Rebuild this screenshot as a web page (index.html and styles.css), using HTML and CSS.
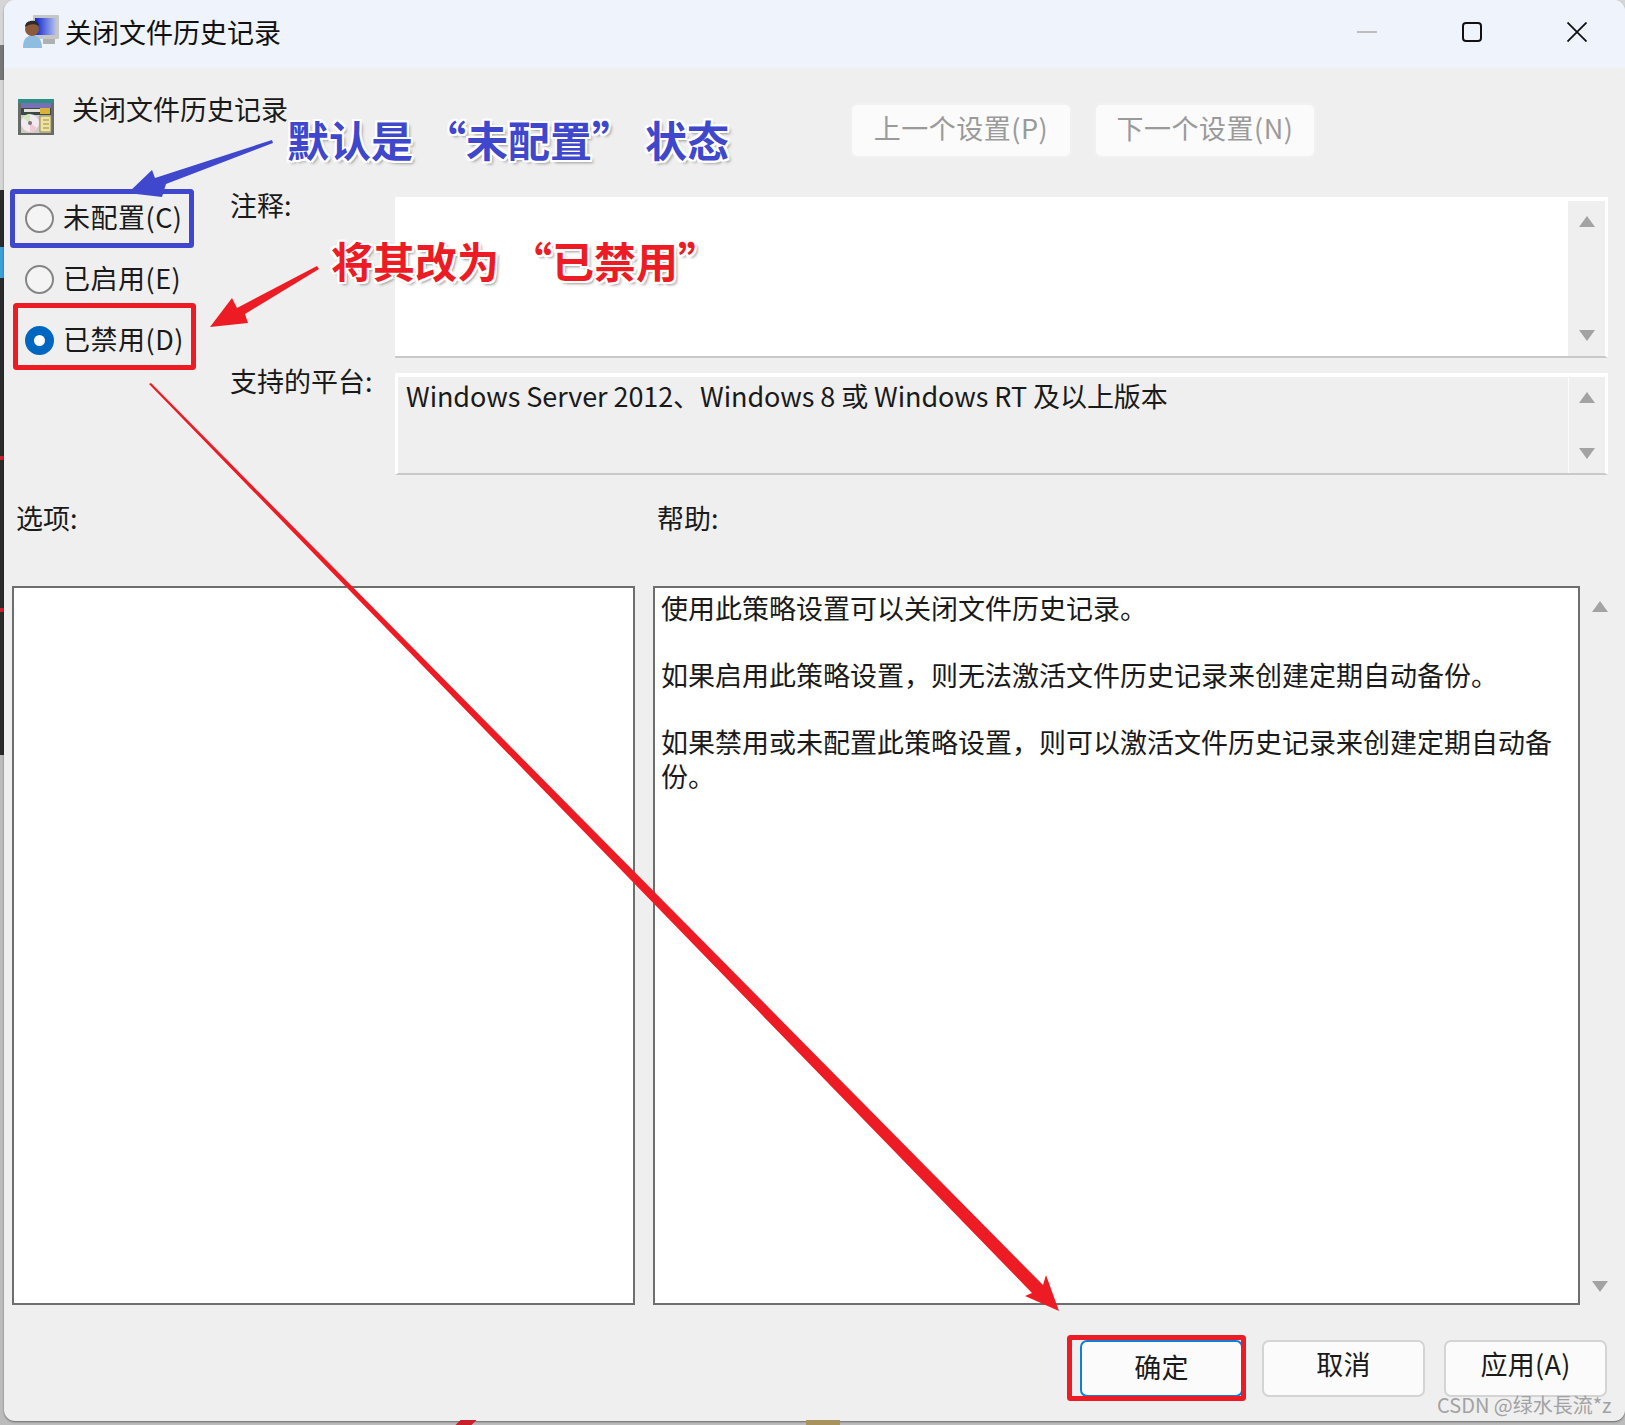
FILE: index.html
```html
<!DOCTYPE html>
<html lang="zh-CN">
<head>
  <meta charset="UTF-8" />
  <meta name="viewport" content="width=device-width, initial-scale=1.0" />
  <title>关闭文件历史记录</title>
  <link rel="stylesheet" href="styles.css">
</head>
<body>
  <div class="page">
    <div class="desk-bit slash"></div>
    <div class="desk-bit folder"></div>

    <div class="window">
      <div class="titlebar">
        <svg class="title-icon" viewBox="0 0 36 34">
          <defs>
            <linearGradient id="screen" x1="0" x2="1" y1="0" y2="0">
              <stop offset="0" stop-color="#0a22d0"/>
              <stop offset="1" stop-color="#b4c2ee"/>
            </linearGradient>
          </defs>
          <rect x="10" y="0" width="26" height="24" rx="1" fill="#c6c6c6"/>
          <rect x="12" y="3" width="21" height="17" fill="url(#screen)"/>
          <rect x="20" y="24" width="12" height="5" fill="#b0b0b0"/>
          <path d="M0 33 C0 24 3 21 10 20 C16 21 19 25 19 33 Z" fill="#8fbde0"/>
          <circle cx="9" cy="14" r="7" fill="#8a5a3a"/>
          <path d="M2 12 C2 4 16 4 16 11 C11 8 6 9 2 12 Z" fill="#2f2a28"/>
        </svg>
        <span class="title-text">关闭文件历史记录</span>
        <div class="win-controls">
          <svg viewBox="0 0 20 20"><path d="M0 10H20" stroke="#bdbdbd" stroke-width="2"/></svg>
          <svg viewBox="0 0 20 20"><rect x="1" y="1" width="18" height="18" rx="3" fill="none" stroke="#111" stroke-width="2"/></svg>
          <svg viewBox="0 0 20 20"><path d="M0.5 0.5L19.5 19.5M19.5 0.5L0.5 19.5" stroke="#111" stroke-width="1.8"/></svg>
        </div>
      </div>

      <div class="top-row">
        <svg class="policy-icon" viewBox="0 0 36 36">
          <rect width="36" height="36" fill="#666a68"/>
          <rect x="0" y="0" width="36" height="4" fill="#2c8f86"/>
          <rect x="3" y="4" width="30" height="5" fill="#7670b4"/>
          <rect x="3" y="9" width="30" height="7" fill="#3a4a44"/>
          <rect x="6" y="10" width="18" height="3" fill="#e4e2da"/>
          <rect x="22" y="9" width="10" height="6" fill="#d8b23c"/>
          <rect x="3" y="16" width="30" height="18" fill="#cfcbbf"/>
          <circle cx="12" cy="24" r="9" fill="#f3e9f0"/>
          <path d="M12 24L5 19A9 9 0 0 1 12 15Z" fill="#cfe6b8"/>
          <path d="M12 24L19 29A9 9 0 0 1 12 33Z" fill="#f0c8d8"/>
          <circle cx="12" cy="24" r="2" fill="#777"/>
          <rect x="22" y="17" width="11" height="16" fill="#f2e39c" stroke="#8f8a60"/>
          <path d="M25 21H31M25 25H31M25 29H31" stroke="#8f8a60"/>
        </svg>
        <span class="policy-name">关闭文件历史记录</span>
        <div class="nav-buttons">
          <button class="btn disabled">上一个设置(P)</button>
          <button class="btn disabled">下一个设置(N)</button>
        </div>
      </div>

      <div class="settings">
        <div class="radios">
          <div class="radio-row"><span class="radio"></span>未配置(C)</div>
          <div class="radio-row"><span class="radio"></span>已启用(E)</div>
          <div class="radio-row"><span class="radio checked"></span>已禁用(D)</div>
        </div>
        <div class="fields">
          <div class="field">
            <label>注释:</label>
            <div class="box note-box">
              <div class="box-text"></div>
              <div class="scroll"><span class="tri up"></span><span class="tri down"></span></div>
            </div>
          </div>
          <div class="field">
            <label>支持的平台:</label>
            <div class="box platform-box">
              <div class="box-text">Windows Server 2012、Windows 8 或 Windows RT 及以上版本</div>
              <div class="scroll"><span class="tri up"></span><span class="tri down"></span></div>
            </div>
          </div>
        </div>
      </div>

      <div class="panels">
        <div class="panel options">
          <div class="panel-label">选项:</div>
          <div class="list"></div>
        </div>
        <div class="panel help">
          <div class="panel-label">帮助:</div>
          <div class="list help-text">
            <p>使用此策略设置可以关闭文件历史记录。</p>
            <p>如果启用此策略设置&#xFF0C;则无法激活文件历史记录来创建定期自动备份。</p>
            <p>如果禁用或未配置此策略设置&#xFF0C;则可以激活文件历史记录来创建定期自动备份。</p>
          </div>
        </div>
        <div class="help-scroll"><span class="tri up"></span><span class="tri down"></span></div>
      </div>

      <div class="footer">
        <button class="btn focused">确定</button>
        <button class="btn">取消</button>
        <button class="btn">应用(A)</button>
      </div>
    </div>

    <!-- annotations drawn on top of the screenshot -->
    <svg class="marks" viewBox="0 0 1625 1425">
      <rect x="12.5" y="191.5" width="179" height="54" fill="none" stroke="#3f48cc" stroke-width="5" rx="1"/>
      <rect x="15.5" y="305.5" width="178" height="62" fill="none" stroke="#ed1c24" stroke-width="5" rx="1"/>
      <rect x="1069.5" y="1337.5" width="174" height="61" fill="none" stroke="#ed1c24" stroke-width="5" rx="1"/>
      <polygon points="272,140 273,143 166,184 162,197 128,193 152,170 155,178" fill="#3f48cc"/>
      <polygon points="317,266 319,269 245,314 248,323 210,327 232,298 237,308" fill="#ed1c24"/>
      <polygon points="149,384 151,383 1043,1285 1046,1275 1059,1311 1025,1296 1032,1293" fill="#ed1c24"/>
    </svg>
    <div class="note note-blue">默认是 “未配置” 状态</div>
    <div class="note note-red">将其改为 “已禁用”</div>
    <div class="watermark">CSDN @绿水長流*z</div>
  </div>
</body>
</html>
```

FILE: styles.css
```css
* {
  box-sizing: border-box;
  margin: 0;
  padding: 0;
  font-family: "Noto Sans CJK SC", "Noto Sans", sans-serif;
}
body {
  background: #b9b9b9;
  overflow: hidden;
}
.page {
  position: relative;
  width: 1625px;
  height: 1425px;
  overflow: hidden;
  background: linear-gradient(to bottom,
    #d6d6d6 0, #d6d6d6 45px, #777 45px, #777 80px, #d6d6d6 80px, #d6d6d6 190px,
    #2b2b2b 190px, #2b2b2b 247px, #3aa0d8 247px, #3aa0d8 278px, #2b2b2b 278px,
    #2b2b2b 456px, #c8202a 456px, #c8202a 460px, #2b2b2b 460px,
    #2b2b2b 608px, #c8202a 608px, #c8202a 612px, #2b2b2b 612px,
    #2b2b2b 755px, #bcbcbc 755px, #bcbcbc 100%);
}
.desk-bit {
  position: absolute;
}
.slash {
  left: 458px;
  top: 1420px;
  width: 16px;
  height: 5px;
  background: #c8202a;
  transform: skewX(-45deg);
}
.folder {
  left: 806px;
  top: 1420px;
  width: 34px;
  height: 5px;
  background: #a8935c;
}
.window {
  width: 1621px;
  height: 1421px;
  margin-left: 4px;
  background: #efefef;
  border-radius: 11px;
  box-shadow: 0 1px 2px rgba(0, 0, 0, 0.45);
  overflow: hidden;
  color: #1a1a1a;
  font-size: 27px;
}

/* title bar */
.titlebar {
  display: flex;
  align-items: center;
  height: 68px;
  padding: 0 38px 4px 19px;
  background: #eff3fb;
}
.title-icon {
  width: 36px;
  height: 34px;
  margin-right: 6px;
}
.title-text {
  color: #111;
  margin-top: -2px;
}
.win-controls {
  display: flex;
  gap: 85px;
  margin-left: auto;
}
.win-controls svg {
  width: 20px;
  height: 20px;
}

/* heading row */
.top-row {
  display: flex;
  align-items: flex-start;
  height: 119px;
  padding: 31px 309px 0 14px;
}
.policy-icon {
  width: 36px;
  height: 36px;
  margin-right: 18px;
}
.policy-name {
  margin-top: -10px;
}
.nav-buttons {
  display: flex;
  gap: 22px;
  margin-left: auto;
  padding-top: 4px;
}
.btn {
  width: 163px;
  height: 57px;
  padding-bottom: 10px;
  background: #fbfbfb;
  border: 2px solid #d4d4d4;
  border-radius: 7px;
  color: #1a1a1a;
  font-size: 27px;
  letter-spacing: 0.3px;
}
.btn.disabled {
  width: 222px;
  height: 55px;
  padding-bottom: 6px;
  border-color: #f1f1f1;
  color: #9a9a9a;
  letter-spacing: 0.5px;
}
.btn.focused {
  padding-bottom: 4px;
  border-color: #0f7fd8;
}

/* radios and top fields */
.settings {
  display: flex;
}
.radios {
  width: 226px;
  padding-left: 21px;
  letter-spacing: 0.5px;
}
.radio-row {
  display: flex;
  align-items: center;
  height: 61px;
  padding-bottom: 2px;
}
.radio {
  flex: none;
  width: 29px;
  height: 29px;
  margin: 4px 9px 0 0;
  border: 2px solid #858585;
  border-radius: 50%;
  background: #f4f4f4;
}
.radio.checked {
  border: 9px solid #0067c0;
  background: #fff;
}
.fields {
  flex: 1;
  display: flex;
  flex-direction: column;
  gap: 15px;
  padding: 10px 17px 0 0;
}
.field {
  display: flex;
}
.field label {
  width: 165px;
  line-height: 34px;
  margin-top: -9px;
}
.box {
  flex: 1;
  display: flex;
  border-bottom: 2px solid #c9c9c9;
  border-right: 3px solid #fff;
}
.note-box {
  height: 161px;
  background: #fff;
}
.platform-box {
  height: 102px;
  background: #efefef;
  border-top: 4px solid #fff;
  border-left: 3px solid #fff;
}
.box-text {
  flex: 1;
  padding: 0 8px;
  line-height: 38px;
  letter-spacing: -0.08px;
}
.scroll {
  display: flex;
  flex-direction: column;
  align-items: center;
  justify-content: space-between;
  width: 37px;
  margin-top: 4px;
  padding: 15px 0 15px;
  background: #efefef;
}
.platform-box .scroll {
  margin-top: 0;
  border-left: 1px solid #fbfbfb;
  padding: 15px 0 14px;
}
.tri {
  display: block;
  width: 0;
  height: 0;
  border-left: 8px solid transparent;
  border-right: 8px solid transparent;
}
.tri.up {
  border-bottom: 11px solid #a3a3a3;
}
.tri.down {
  border-top: 11px solid #a3a3a3;
}

/* options and help */
.panels {
  display: flex;
  gap: 18px;
  padding-left: 8px;
}
.panel {
  display: flex;
  flex-direction: column;
}
.options {
  width: 623px;
}
.help {
  width: 927px;
}
.panel-label {
  height: 111px;
  padding: 24px 0 0 4px;
  line-height: 38px;
}
.list {
  height: 719px;
  background: #fff;
  border: 2px solid #6e6e6e;
}
.help-text {
  padding: 3px 6px 0;
  line-height: 33.5px;
}
.help-text p {
  margin-bottom: 33.5px;
}
.help-scroll {
  display: flex;
  flex-direction: column;
  justify-content: space-between;
  height: 719px;
  margin-top: 111px;
  margin-left: -6px;
  padding: 15px 0 13px;
}

/* bottom buttons */
.footer {
  display: flex;
  justify-content: flex-end;
  gap: 19px;
  padding: 35px 18px 0 0;
}

/* annotations */
.marks {
  position: absolute;
  top: 0;
  left: 0;
  width: 1625px;
  height: 1425px;
  pointer-events: none;
}
.note {
  position: absolute;
  font-size: 42px;
  font-weight: 700;
  line-height: 56px;
  white-space: pre;
  word-spacing: 1.5px;
  text-shadow: 2px 2px 0 #fff, -2px -2px 0 #fff, 2px -2px 0 #fff, -2px 2px 0 #fff, 2px 0 0 #fff, -2px 0 0 #fff, 0 2px 0 #fff, 0 -2px 0 #fff, 3px 3px 3px #999;
}
.note-blue {
  left: 287px;
  top: 111px;
  color: #3f48cc;
}
.note-red {
  left: 331px;
  top: 232px;
  color: #ed1c24;
}
.watermark {
  position: absolute;
  left: 1437px;
  top: 1392px;
  font-size: 20px;
  line-height: 26px;
  color: #a2a2a2;
  white-space: nowrap;
}
```
